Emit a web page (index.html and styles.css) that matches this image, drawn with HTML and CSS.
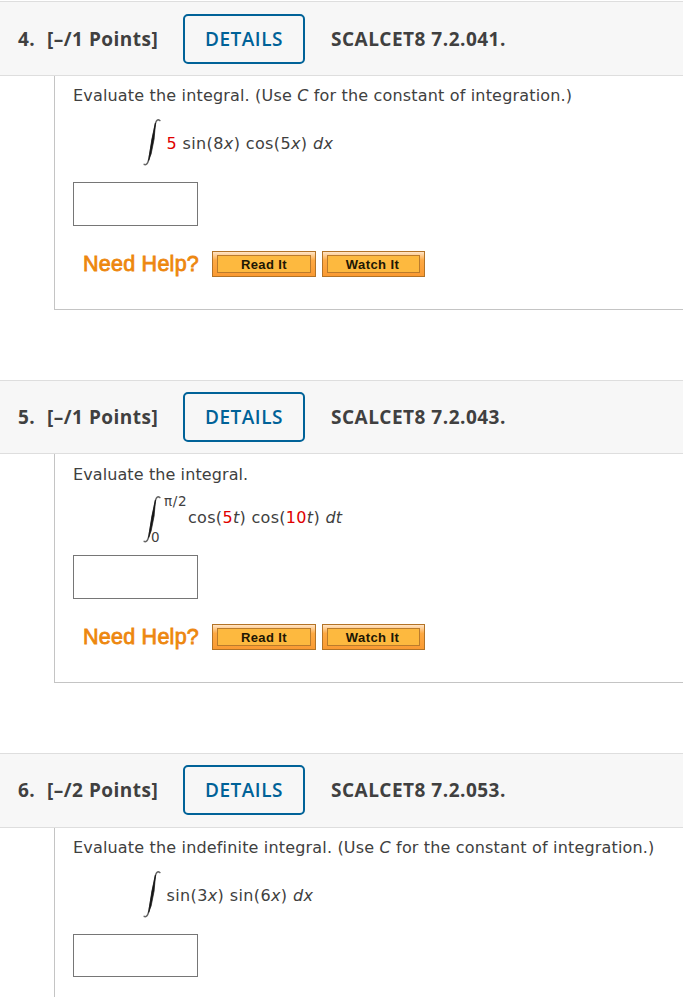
FILE: index.html
```html
<!DOCTYPE html>
<html lang="en">
<head>
<meta charset="utf-8">
<title>Integrals homework</title>
<link rel="stylesheet" href="styles.css">
</head>
<body>
<svg class="defs" aria-hidden="true">
  <symbol id="integral" viewBox="0 0 18 47">
    <path d="M17.400 2L16 .9C14 .6 12.900 2.300 12.200 5.500L6 39.500C5.100 43.500 4 45.700 2.300 45.700L.6 45.300" fill="none" stroke="#666" stroke-width="1.500"/><path d="M12.500 4L8.900 20L5.600 41.500L8.100 35L11.100 20Z" fill="#151515" stroke="#151515" stroke-width=".7"/>
  </symbol>
</svg>
<main>
  <section class="question q4">
    <header class="bar">
      <span class="num">4.</span><span class="points">[–/1 Points]</span>
      <a class="details"><span>DETAILS</span></a>
      <span class="ref">SCALCET8 7.2.041.</span>
    </header>
    <div class="body">
      <p class="prompt">Evaluate the integral. (Use <i>C</i> for the constant of integration.)</p>
      <div class="math"><svg class="int"><use href="#integral"/></svg><span class="expr"><b>5</b> sin(8<i>x</i>) cos(5<i>x</i>) <i>dx</i></span></div>
      <input class="answer" aria-label="Answer">
      <div class="help"><strong>Need Help?</strong><button>Read It</button><button class="watch">Watch It</button></div>
    </div>
  </section>
  <section class="question q5">
    <header class="bar">
      <span class="num">5.</span><span class="points">[–/1 Points]</span>
      <a class="details"><span>DETAILS</span></a>
      <span class="ref">SCALCET8 7.2.043.</span>
    </header>
    <div class="body">
      <p class="prompt">Evaluate the integral.</p>
      <div class="math"><svg class="int"><use href="#integral"/></svg><span class="limits"><span class="upper">π/2</span><span class="lower">0</span></span><span class="expr">cos(<b>5</b><i>t</i>) cos(<b>10</b><i>t</i>) <i>dt</i></span></div>
      <input class="answer" aria-label="Answer">
      <div class="help"><strong>Need Help?</strong><button>Read It</button><button class="watch">Watch It</button></div>
    </div>
  </section>
  <section class="question q6">
    <header class="bar">
      <span class="num">6.</span><span class="points">[–/2 Points]</span>
      <a class="details"><span>DETAILS</span></a>
      <span class="ref">SCALCET8 7.2.053.</span>
    </header>
    <div class="body">
      <p class="prompt">Evaluate the indefinite integral. (Use <i>C</i> for the constant of integration.)</p>
      <div class="math"><svg class="int"><use href="#integral"/></svg><span class="expr">sin(3<i>x</i>) sin(6<i>x</i>) <i>dx</i></span></div>
      <input class="answer" aria-label="Answer">
    </div>
  </section>
</main>
</body>
</html>
```
FILE: styles.css
```css
* { box-sizing: border-box; }
body { margin: 0; background: #fff; color: #404040; overflow: hidden; }
.defs { display: none; }
main { height: 997px; padding-top: 1px; overflow: hidden; }
.bar {
  display: flex;
  height: 75px;
  padding: 12px 0 0 18px;
  background: #f7f7f7;
  border: solid #dedede;
  border-width: 1px 0;
  font: 700 19px/50px "Open Sans", sans-serif;
  letter-spacing: .49px;
  white-space: nowrap;
}
.num { width: 29px; }
.points { width: 136px; }
.details {
  width: 122px;
  height: 50px;
  margin-right: 26px;
  border: 2px solid #006298;
  border-radius: 5px;
  color: #006298;
  font-weight: 600;
  line-height: 46px;
  text-align: center;
}
.q5 .bar, .q6 .bar { padding-top: 11px; }
.q5 .bar { height: 74px; }
.body {
  display: flex;
  flex-direction: column;
  align-items: flex-start;
  height: 234px;
  margin: 0 0 70px 54px;
  padding: 10px 0 0 18px;
  border: solid #c4c4c4;
  border-width: 0 0 1px 1px;
  font: 16px/20px "DejaVu Sans", sans-serif;
}
.q5 .body { height: 229px; padding-top: 11px; }
.q6 .body { height: 240px; margin-bottom: 0; }
.prompt { margin: 0; height: 33px; white-space: nowrap; letter-spacing: .17px; }
.q5 .prompt { height: 31px; letter-spacing: .1px; }
.math { display: flex; height: 63px; padding-left: 70px; white-space: nowrap; letter-spacing: .38px; }
.q5 .math { height: 59px; letter-spacing: .31px; }
.int { width: 18px; height: 47px; }
.expr { margin: 15px 0 0 5.5px; }
.math b { color: #e00000; font-weight: 400; }
.limits { display: flex; flex-direction: column; width: 27px; font-size: 13.5px; line-height: 16px; letter-spacing: .7px; }
.upper { margin: -3px 0 0 3px; }
.lower { margin: 20px 0 0 -10px; }
.q5 .expr { margin: 12px 0 0 0; }
.answer { width: 125px; height: 44px; margin: 0; padding: 0; border: 1px solid #767676; border-radius: 0; background: #fff; }
.q6 .answer { height: 43px; }
.help { display: flex; margin: 25px 0 0 10px; gap: 6px; }
.help strong { width: 123px; color: #ed870f; font: 400 21.5px/26px "Liberation Sans", sans-serif; -webkit-text-stroke: .8px #ed870f; letter-spacing: .25px; }
.help button {
  width: 104px;
  height: 26px;
  padding: 4px;
  border: 1px solid #b37326;
  background: linear-gradient(#ffe5c8, #fda943 35%, #fa9a32);
  color: #201604;
  font: 700 13px/17px "Liberation Sans", sans-serif;
  letter-spacing: .4px;
  position: relative;
  isolation: isolate;
}
.help button::before {
  content: "";
  position: absolute;
  inset: 3px 4px;
  z-index: -1;
  background: #fdb93f;
  border: 1px solid #ba7b2c;
}
.help .watch { width: 103px; padding-right: 6px; }
```
